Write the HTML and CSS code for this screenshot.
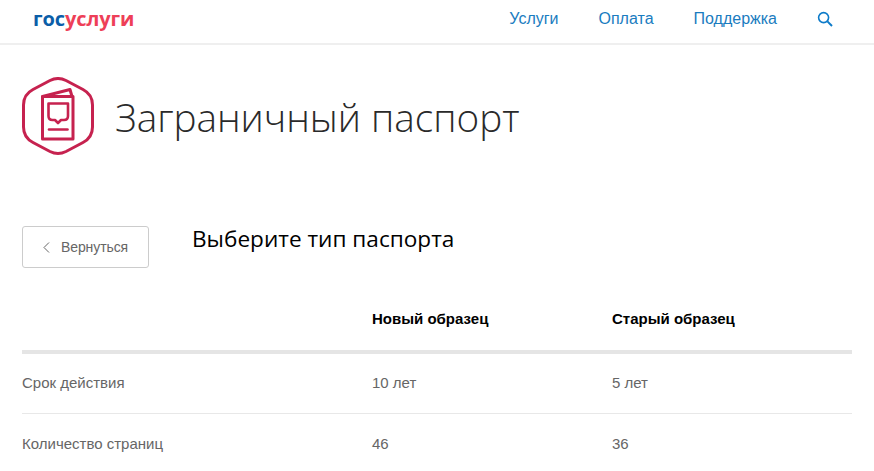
FILE: index.html
```html
<!DOCTYPE html>
<html lang="ru">

<head>
  <meta charset="UTF-8">
  <meta name="viewport" content="width=device-width, initial-scale=1.0">
  <title>Заграничный паспорт</title>
  <link rel="stylesheet" href="styles.css">
</head>

<body>
  <header class="topbar">
    <a class="logo" href="#"><span class="logo-blue">гос</span><span class="logo-red">услуги</span></a>
    <nav class="nav">
      <a href="#">Услуги</a>
      <a href="#">Оплата</a>
      <a href="#">Поддержка</a>
      <a class="search" href="#" aria-label="Поиск">
        <svg width="16" height="16" viewBox="0 0 16 16" fill="none" stroke="#0d7bc9">
          <circle cx="6.6" cy="6.6" r="5" stroke-width="1.6" />
          <path d="M10.4 10.4 15 15" stroke-width="2" />
        </svg>
      </a>
    </nav>
  </header>

  <main class="page">
    <div class="title-row">
      <svg class="title-icon" width="72" height="79" viewBox="0 0 72 79" fill="none" stroke="#c6224f" stroke-width="3" stroke-linejoin="round" stroke-linecap="round">
        <path d="M28 3.500 Q36 -.5 44 3.500 L61 12.500 Q70.500 17.500 70.500 28 V50 Q70.500 60.500 61 65.500 L44 74.500 Q36 78.500 28 74.500 L11 65.500 Q1.500 60.500 1.500 50 V28 Q1.500 17.500 11 12.500 Z" />
        <path d="M20.500 19.500 H51 V62 H20.500 Z" />
        <path d="M20.500 19.500 L48 12.500 L50 19.500" />
        <path d="M26.500 26.500 H46 V39 Q46 43 42 43 H39 L36 46 L33 43 H30.500 Q26.500 43 26.500 39 Z" stroke-width="2.600" />
        <path d="M27 52.500 H45.500" stroke-width="2.600" />
      </svg>
      <h1 class="title">Заграничный паспорт</h1>
    </div>

    <div class="choose-row">
      <a class="back-btn" href="#">
        <svg width="7" height="11" viewBox="0 0 7 11" fill="none" stroke="#666">
          <path d="M6 .5 1 5.500 6 10.500" />
        </svg>
        Вернуться
      </a>
      <h2 class="choose-title">Выберите тип паспорта</h2>
    </div>

    <table class="compare">
      <thead>
        <tr>
          <th></th>
          <th>Новый образец</th>
          <th>Старый образец</th>
        </tr>
      </thead>
      <tbody>
        <tr>
          <td>Срок действия</td>
          <td>10 лет</td>
          <td>5 лет</td>
        </tr>
        <tr>
          <td>Количество страниц</td>
          <td>46</td>
          <td>36</td>
        </tr>
      </tbody>
    </table>
  </main>
</body>

</html>
```

FILE: styles.css
```css
* {
  margin: 0;
  padding: 0;
  box-sizing: border-box;
}

html,
body {
  height: 100%;
  overflow: hidden;
}

body {
  background-color: #fff;
  font-family: "Liberation Sans", Arial, sans-serif;
  color: #666;
}

a {
  text-decoration: none;
}

.topbar {
  display: flex;
  justify-content: space-between;
  align-items: center;
  height: 45px;
  padding: 0 41px 6px 33px;
  border-bottom: 2px solid #efefef;
}

.logo {
  font-family: "Open Sans", sans-serif;
  font-size: 20px;
  font-weight: 700;
  letter-spacing: -.1px;
}

.logo-blue {
  color: #0b5ea8;
}

.logo-red {
  color: #ee3f58;
}

.nav {
  display: flex;
  align-items: center;
  gap: 40px;
}

.nav a {
  color: #1a7cc0;
  font-size: 16px;
}

.nav .search {
  display: flex;
}

.page {
  padding: 0 22px;
}

.title-row {
  display: flex;
  align-items: center;
  gap: 21px;
  margin-top: 32px;
}

.title {
  font-family: "Open Sans", sans-serif;
  font-weight: 300;
  font-size: 38.700px;
  color: #2a2a2a;
}

.choose-row {
  display: flex;
  align-items: flex-start;
  margin-top: 70px;
}

.back-btn {
  display: flex;
  align-items: center;
  gap: 11px;
  width: 127px;
  height: 42px;
  padding-left: 20px;
  border: 1px solid #ccc;
  border-radius: 3px;
  font-size: 14px;
  letter-spacing: -.1px;
  color: #666;
}

.choose-title {
  margin: 0 0 0 43px;
  font-family: "Open Sans", sans-serif;
  font-size: 22.600px;
  line-height: 26px;
  font-weight: 400;
  color: #000;
}

.compare {
  width: 830px;
  margin-top: 30px;
  border-collapse: collapse;
  table-layout: fixed;
  font-size: 15px;
}

.compare th,
.compare td {
  text-align: left;
}

.compare th:nth-child(1) {
  width: 350px;
}

.compare th:nth-child(2) {
  width: 240px;
}

.compare th {
  height: 54px;
  padding-bottom: 12px;
  border-bottom: 4px solid #e5e5e5;
  color: #000;
  font-weight: 700;
}

.compare td {
  height: 61px;
  padding-bottom: 1px;
  border-bottom: 1px solid #e8e8e8;
}
```
